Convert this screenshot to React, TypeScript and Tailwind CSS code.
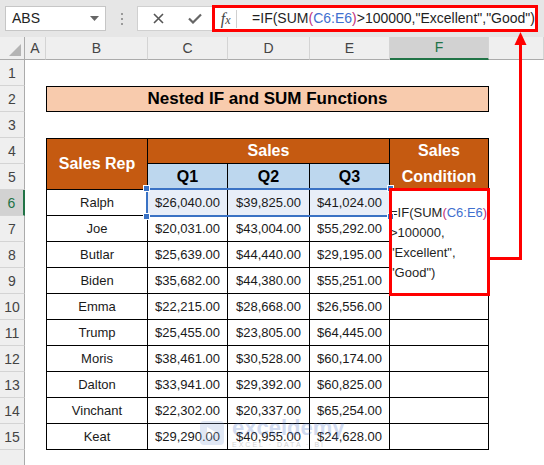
import React from "react";

const SANS = "font-['Liberation_Sans',Arial,sans-serif]";

type Row = { name: string; q1: string; q2: string; q3: string };

const ROWS: Row[] = [
  { name: "Ralph", q1: "$26,040.00", q2: "$39,825.00", q3: "$41,024.00" },
  { name: "Joe", q1: "$20,031.00", q2: "$43,004.00", q3: "$55,292.00" },
  { name: "Butlar", q1: "$25,639.00", q2: "$44,440.00", q3: "$29,195.00" },
  { name: "Biden", q1: "$35,682.00", q2: "$44,380.00", q3: "$55,251.00" },
  { name: "Emma", q1: "$22,215.00", q2: "$28,668.00", q3: "$26,556.00" },
  { name: "Trump", q1: "$25,455.00", q2: "$23,805.00", q3: "$64,445.00" },
  { name: "Moris", q1: "$38,461.00", q2: "$30,528.00", q3: "$60,174.00" },
  { name: "Dalton", q1: "$33,941.00", q2: "$29,392.00", q3: "$60,825.00" },
  { name: "Vinchant", q1: "$22,302.00", q2: "$20,337.00", q3: "$65,254.00" },
  { name: "Keat", q1: "$29,290.00", q2: "$40,955.00", q3: "$24,628.00" },
];

// G is only partly visible, its letter falls outside the window
const COLS = ["A", "B", "C", "D", "E", "F", ""];

function RowHead({ n, active }: { n?: number; active?: boolean }) {
  return (
    <div
      className={`flex items-end justify-center pb-[1px] text-[14px] border-b border-[#d4d4d4] ${
        active
          ? "bg-[#d2d2d2] text-[#217346] border-r-2 border-r-[#217346]"
          : "bg-[#efefef] text-[#444] border-r border-r-[#ababab]"
      }`}
    >
      {n}
    </div>
  );
}

function Empty() {
  return <div />;
}

function Td({ children, className = "" }: { children?: React.ReactNode; className?: string }) {
  return (
    <div
      className={`flex items-center justify-center border-r border-b border-black text-[13px] text-[#1a1a1a] ${className}`}
    >
      {children}
    </div>
  );
}

function FormulaText() {
  return (
    <>
      <span>=IF(SUM</span>
      <span className="text-[#c2307c]">(</span>
      <span className="text-[#3f6fcf]">C6:E6</span>
      <span className="text-[#c2307c]">)</span>
    </>
  );
}

function Toolbar() {
  return (
    <div className={`flex items-center h-[37px] bg-[#e6e6e6] ${SANS}`}>
      {/* Name box */}
      <div className="ml-[5px] flex items-center justify-between w-[101px] h-[25px] bg-white border border-[#c6c6c6] pl-[6px] pr-[6px]">
        <span className="text-[14px] text-[#222]">ABS</span>
        <svg width="9" height="5" viewBox="0 0 9 5">
          <path d="M0 0h9L4.5 5z" fill="#666" />
        </svg>
      </div>
      <div className="w-[31px] flex flex-col items-center gap-[3px]">
        <span className="w-[2px] h-[2px] bg-[#9a9a9a]" />
        <span className="w-[2px] h-[2px] bg-[#9a9a9a]" />
        <span className="w-[2px] h-[2px] bg-[#9a9a9a]" />
      </div>
      {/* Cancel / enter */}
      <div className="flex items-center w-[75px] h-[25px] bg-white border border-r-0 border-[#d0d0d0]">
        <svg className="ml-[15px]" width="11" height="11" viewBox="0 0 11 11">
          <path d="M1 1l9 9M10 1l-9 9" stroke="#555" strokeWidth="1.6" />
        </svg>
        <svg className="ml-[24px]" width="14" height="11" viewBox="0 0 14 11">
          <path d="M1 5.5l4 4L13 1.5" stroke="#666" strokeWidth="2.2" fill="none" />
        </svg>
      </div>
      {/* Formula bar with red highlight */}
      <div className="flex items-center w-[326px] h-[27px] border-[3px] border-[#ff0000] bg-white">
        <span className="w-[31px] text-center font-['Liberation_Serif',serif] italic text-[16px] text-[#444] leading-none">
          f<span className="text-[12px]">x</span>
        </span>
        <span className="w-px h-[18px] bg-[#d0d0d0]" />
        <span className="pl-[15px] text-[14px] text-[#1f1f1f] whitespace-nowrap">
          <FormulaText />
          {'>100000,"Excellent","Good")'}
        </span>
      </div>
    </div>
  );
}

function Sheet() {
  return (
    <div
      className={`relative grid grid-cols-[25px_21px_102px_80px_82px_80px_99px_55px] grid-rows-[23px_repeat(16,26px)] bg-white ${SANS}`}
    >
      {/* Column headers */}
      <div className="relative bg-[#efefef] border-r border-b border-[#ababab]">
        <svg className="absolute right-[3px] bottom-[3px]" width="12" height="12" viewBox="0 0 12 12">
          <path d="M12 0v12H0z" fill="#b4b4b4" />
        </svg>
      </div>
      {COLS.map((c, i) => (
        <div
          key={i}
          className={`flex items-center justify-center text-[14px] border-r border-[#d4d4d4] ${
            c === "F"
              ? "bg-[#d2d2d2] text-[#217346] border-b-2 border-b-[#217346]"
              : "bg-[#efefef] text-[#444] border-b border-b-[#ababab]"
          }`}
        >
          {c}
        </div>
      ))}

      {/* Row 1 */}
      <RowHead n={1} />
      <Empty /><Empty /><Empty /><Empty /><Empty /><Empty /><Empty />

      {/* Row 2 */}
      <RowHead n={2} />
      <Empty />
      <div className="col-span-5 flex items-center justify-center bg-[#f8cbad] border border-black text-[17px] font-bold text-black">
        Nested IF and SUM Functions
      </div>
      <Empty />

      {/* Row 3 */}
      <RowHead n={3} />
      <Empty /><Empty /><Empty /><Empty /><Empty /><Empty /><Empty />

      {/* Row 4 */}
      <RowHead n={4} />
      <Empty />
      <Td className="row-span-2 border-l border-t bg-[#c55a11] text-[16px] font-bold text-white">Sales Rep</Td>
      <Td className="col-span-3 border-t bg-[#c55a11] text-[16px] font-bold text-white">Sales</Td>
      <Td className="row-span-2 border-t bg-[#c55a11] text-[16px] font-bold text-white text-center leading-[26px]">
        Sales
        <br />
        Condition
      </Td>
      <Empty />

      {/* Row 5 */}
      <RowHead n={5} />
      <Empty />
      <Td className="bg-[#bdd7ee] text-[16px] font-bold text-black">Q1</Td>
      <Td className="bg-[#bdd7ee] text-[16px] font-bold text-black">Q2</Td>
      <Td className="bg-[#bdd7ee] text-[16px] font-bold text-black">Q3</Td>
      <Empty />

      {/* Data rows 6-15 */}
      {ROWS.map((r, i) => {
        const n = i + 6;
        const sel = n === 6 ? "bg-[#e8eef8]" : "";
        return (
          <React.Fragment key={r.name}>
            <RowHead n={n} active={n === 6} />
            <Empty />
            <Td className="border-l">{r.name}</Td>
            <Td className={sel}>{r.q1}</Td>
            <Td className={sel}>{r.q2}</Td>
            <Td className={sel}>{r.q3}</Td>
            {n === 6 && (
              <div className="row-span-4 border-r border-b border-black pt-[13px] text-[13px] leading-[20px] text-[#1f1f1f] whitespace-nowrap">
                <FormulaText />
                <br />
                {">100000,"}
                <br />
                {'"Excellent",'}
                <br />
                {'"Good")'}
              </div>
            )}
            {n >= 10 && <Td />}
            <Empty />
          </React.Fragment>
        );
      })}

      {/* Row 16 (cut off at the bottom) */}
      <RowHead />
      <Empty /><Empty /><Empty /><Empty /><Empty /><Empty /><Empty />

      {/* Reference highlight C6:E6 */}
      <div className="absolute left-[146px] top-[151px] w-[245px] h-[29px] border-2 border-[#3a72c4] pointer-events-none">
        <span className="absolute -left-[5px] -top-[5px] w-[7px] h-[7px] bg-[#3a72c4] border border-white" />
        <span className="absolute -left-[5px] -bottom-[5px] w-[7px] h-[7px] bg-[#3a72c4] border border-white" />
        <span className="absolute -right-[5px] -top-[5px] w-[7px] h-[7px] bg-[#3a72c4] border border-white" />
        <span className="absolute -right-[5px] -bottom-[5px] w-[7px] h-[7px] bg-[#3a72c4] border border-white" />
      </div>
    </div>
  );
}

function Watermark() {
  return (
    <div className="absolute left-[200px] top-[417px] flex items-center gap-[8px] opacity-25 pointer-events-none">
      <div className="flex items-center justify-center w-[24px] h-[24px] rounded-[4px] bg-[#8aa6d8]">
        <svg width="10" height="12" viewBox="0 0 10 12">
          <path d="M0 0l10 6-10 6z" fill="#fff" />
        </svg>
      </div>
      <div className="flex flex-col leading-none">
        <span className={`text-[22px] font-bold text-[#4a72c8] ${SANS}`}>exceldemy</span>
        <span className={`text-[7px] tracking-[2px] text-[#555] mt-[2px] ${SANS}`}>EXCEL · DATA · BI</span>
      </div>
    </div>
  );
}

export default function App() {
  return (
    <div className="relative w-[544px] h-[465px] overflow-hidden bg-white">
      <Toolbar />
      <Sheet />
      <Watermark />
      {/* Annotation: red box around F6:F9 and arrow to the formula bar */}
      <svg className="absolute inset-0 pointer-events-none" width="544" height="465" viewBox="0 0 544 465">
        <rect x="390.5" y="189.5" width="98" height="105" fill="none" stroke="#ff0000" strokeWidth="3" />
        <path d="M490 258.5H520.5V44" fill="none" stroke="#ff0000" strokeWidth="3" />
        <path d="M520.5 32l-6 13h12z" fill="#ff0000" />
      </svg>
    </div>
  );
}
